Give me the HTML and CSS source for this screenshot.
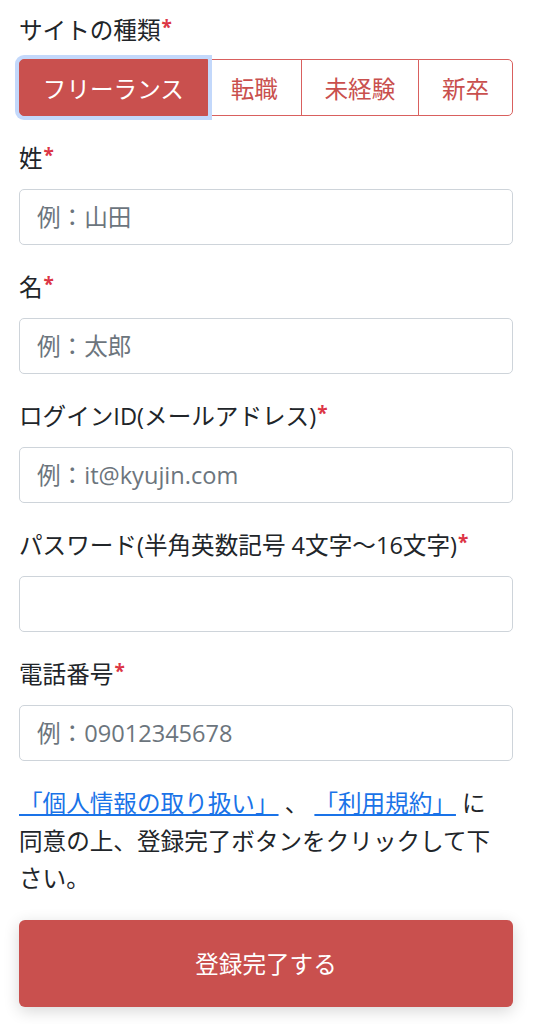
FILE: index.html
```html
<!DOCTYPE html>
<html lang="ja">
<head>
  <meta charset="UTF-8">
  <meta name="viewport" content="width=device-width, initial-scale=1.0">
  <title>会員登録</title>
  <link rel="stylesheet" href="styles.css">
</head>
<body>

<form class="register-form">
  <!-- Site type -->
  <div class="form-group first">
    <label>サイトの種類<span class="required">*</span></label>
    <div class="btn-group">
      <button type="button" class="btn-type active">フリーランス</button>
      <button type="button" class="btn-type">転職</button>
      <button type="button" class="btn-type">未経験</button>
      <button type="button" class="btn-type">新卒</button>
    </div>
  </div>

  <div class="form-group">
    <label for="last-name">姓<span class="required">*</span></label>
    <input type="text" id="last-name" class="form-control" placeholder="例：山田">
  </div>

  <div class="form-group">
    <label for="first-name">名<span class="required">*</span></label>
    <input type="text" id="first-name" class="form-control" placeholder="例：太郎">
  </div>

  <div class="form-group">
    <label for="login-id">ログインID(メールアドレス)<span class="required">*</span></label>
    <input type="email" id="login-id" class="form-control" placeholder="例：it@kyujin.com">
  </div>

  <div class="form-group">
    <label for="password">パスワード(半角英数記号 4文字〜16文字)<span class="required">*</span></label>
    <input type="password" id="password" class="form-control">
  </div>

  <div class="form-group">
    <label for="tel">電話番号<span class="required">*</span></label>
    <input type="tel" id="tel" class="form-control" placeholder="例：09012345678">
  </div>

  <p class="agreement">
    <a href="#">「個人情報の取り扱い」</a> 、 <a href="#">「利用規約」</a> に<br>同意の上、登録完了ボタンをクリックして下さい。
  </p>

  <button type="submit" class="btn-submit">登録完了する</button>
</form>

</body>
</html>
```

FILE: styles.css
```css
body {
  margin: 0;
  font-family: "Open Sans", "Noto Sans CJK JP", sans-serif;
  font-size: 23.6px;
  color: #212529;
  background: #fff;
}
.register-form {
  padding: 12px 21px 40px 19px;
}
.form-group {
  margin-top: 24px;
}
.form-group.first {
  margin-top: 0;
}
label {
  display: block;
  line-height: 36px;
  margin-bottom: 13px;
}
.form-group.first label {
  margin-bottom: 11px;
}
.required {
  color: #dc3545;
  font-size: 19px;
  font-weight: bold;
  vertical-align: top;
  line-height: 30px;
  margin-left: 1px;
}
.btn-group {
  display: flex;
}
.btn-type {
  flex: 1 1 auto;
  height: 57px;
  padding: 0 22px;
  font-family: inherit;
  font-size: 23.6px;
  color: #c9504e;
  background: #fff;
  border: 1px solid #d9605e;
  margin-left: -1px;
  cursor: pointer;
}
.btn-type:first-child {
  margin-left: 0;
  border-radius: 5px 0 0 5px;
}
.btn-type:last-child {
  border-radius: 0 5px 5px 0;
}
.btn-type.active {
  position: relative;
  z-index: 1;
  color: #fff;
  background: #c9504e;
  border-color: #c9504e;
  box-shadow: 0 0 0 4px #c3d8fb;
}
.form-control {
  display: block;
  box-sizing: border-box;
  width: 100%;
  height: 56px;
  padding: 0 17px;
  font-family: inherit;
  font-size: 23.6px;
  color: #495057;
  border: 1px solid #ced4da;
  border-radius: 5px;
}
.form-control::placeholder {
  color: #6c757d;
}
.agreement {
  margin: 24px 0 22px;
  line-height: 37.5px;
}
.agreement a {
  color: #1a73e8;
  text-decoration: underline;
}
.btn-submit {
  display: block;
  width: 100%;
  height: 87px;
  font-family: inherit;
  font-size: 23.6px;
  color: #fff;
  background: #c9504e;
  border: none;
  border-radius: 6px;
  box-shadow: 0 4px 16px rgba(0, 0, 0, 0.16);
  cursor: pointer;
}
```
